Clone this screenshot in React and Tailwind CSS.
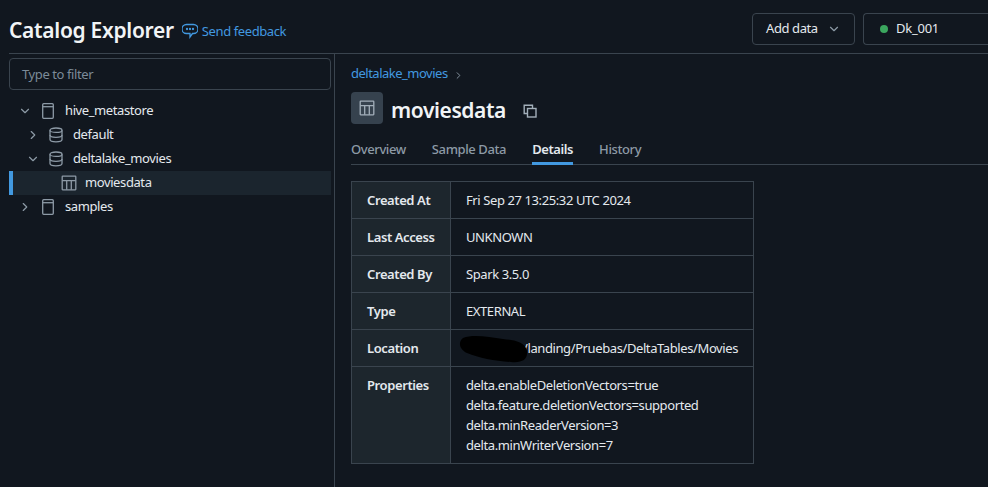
import { ChevronDown, ChevronRight } from 'lucide-react';

const ROWS = [
  { label: 'Created At', value: 'Fri Sep 27 13:25:32 UTC 2024' },
  { label: 'Last Access', value: 'UNKNOWN' },
  { label: 'Created By', value: 'Spark 3.5.0' },
  { label: 'Type', value: 'EXTERNAL' },
];

const PROPERTIES = [
  'delta.enableDeletionVectors=true',
  'delta.feature.deletionVectors=supported',
  'delta.minReaderVersion=3',
  'delta.minWriterVersion=7',
];

const TABS = ['Overview', 'Sample Data', 'Details', 'History'];

function CatalogIcon() {
  return (
    <svg width="16" height="16" viewBox="0 0 16 16" fill="none" stroke="#8d9aa6" strokeWidth="1.3">
      <rect x="2.7" y="0.7" width="10.6" height="14.6" rx="1" />
      <path d="M2.7 3.7h10.6" />
    </svg>
  );
}

function SchemaIcon() {
  return (
    <svg width="16" height="16" viewBox="0 0 16 16" fill="none" stroke="#8d9aa6" strokeWidth="1.3">
      <ellipse cx="8" cy="3.2" rx="6" ry="2.2" />
      <path d="M2 3.200v9.300c0 1.300 2.700 2.300 6 2.300s6-1 6-2.300V3.200" />
      <path d="M2 8c0 1.300 2.700 2.300 6 2.300s6-1 6-2.300" />
    </svg>
  );
}

function TableIcon({ size = 16, color = '#8d9aa6' }) {
  return (
    <svg width={size} height={size} viewBox="0 0 16 16" fill="none" stroke={color} strokeWidth="1.3">
      <rect x="1.2" y="1.200" width="13.600" height="13.600" rx="0.5" />
      <path d="M1.200 5.700h13.600M5.700 5.700v9.100M10.300 5.700v9.100" />
    </svg>
  );
}

function TreeRow({ indent, open, leaf, icon, label, selected }) {
  return (
    <div className={`relative flex h-6 items-center ${indent} ${selected ? 'bg-[#1b252e]' : ''}`}>
      {selected && <div className="absolute inset-y-0 left-0 w-[4px] bg-[#4299e0]" />}
      {leaf ? null : open ? (
        <ChevronDown size={14} className="mr-[8px] text-[#8d9aa6]" />
      ) : (
        <ChevronRight size={14} className="mr-[8px] text-[#8d9aa6]" />
      )}
      {icon}
      <span className={`text-[13px] tracking-[-0.4px] text-[#e4e9ee] ${leaf ? 'ml-[8px]' : 'ml-[9px]'}`}>{label}</span>
    </div>
  );
}

function Sidebar() {
  return (
    <aside className="w-[325px] shrink-0 pt-[4px]">
      <div className="flex h-[32px] w-[322px] items-center rounded border border-[#3a444e] px-[12px] pt-[1px] text-[13px] tracking-[-0.4px] text-[#7c8b99]">
        Type to filter
      </div>
      <div className="mt-[9px] w-[322px]">
        <TreeRow indent="pl-[9px]" open icon={<CatalogIcon />} label="hive_metastore" />
        <TreeRow indent="pl-[17px]" icon={<SchemaIcon />} label="default" />
        <TreeRow indent="pl-[17px]" open icon={<SchemaIcon />} label="deltalake_movies" />
        <TreeRow indent="pl-[52px]" leaf selected icon={<TableIcon />} label="moviesdata" />
        <TreeRow indent="pl-[9px]" icon={<CatalogIcon />} label="samples" />
      </div>
    </aside>
  );
}

function DetailRow({ label, children, tall }) {
  return (
    <div className={`flex border-b border-[#3a444e] last:border-b-0 ${tall ? 'h-[96px]' : 'h-[37px]'}`}>
      <div className="flex w-[99px] shrink-0 border-r border-[#3a444e] bg-[#1d262d] pl-[15px] pt-[10px] text-[13px] font-semibold leading-[16px] tracking-[-0.4px] text-[#e4e9ee]">
        {label}
      </div>
      <div className="relative flex-1 pl-[15px] pt-[10px] text-[13px] leading-[16px] tracking-[-0.4px] text-[#e4e9ee]">{children}</div>
    </div>
  );
}

export default function App() {
  return (
    <div className="h-[487px] w-[988px] overflow-hidden bg-[#11171f] pl-[9px] font-['Noto_Sans',sans-serif]">
      <header className="flex h-[54px] items-start border-b border-[#3a444e]">
        <h1 className="mt-[16px] text-[21px] font-semibold leading-[28px] tracking-[-0.3px] text-[#f1f4f6]">Catalog Explorer</h1>
        <a className="ml-[8px] mt-[23px] flex items-center gap-[4px] text-[13px] leading-[16px] tracking-[-0.4px] text-[#4299e0]">
          <svg width="16" height="16" viewBox="0 0 16 16" fill="none" stroke="#4299e0" strokeWidth="1.3">
            <path d="M4.500 1.500h7a3.500 3.500 0 0 1 0 9H10.500L8 14v-3.500H4.500a3.500 3.500 0 0 1 0-9z" />
            <circle cx="5" cy="6" r="0.5" fill="#4299e0" />
            <circle cx="8" cy="6" r="0.5" fill="#4299e0" />
            <circle cx="11" cy="6" r="0.5" fill="#4299e0" />
          </svg>
          Send feedback
        </a>
        <div className="ml-auto mt-[13px] flex gap-[8px]">
          <button className="flex h-[32px] w-[103px] items-center rounded border border-[#3a444e] pl-[13px] text-[13px] tracking-[-0.4px] text-[#e4e9ee]">
            Add data
            <ChevronDown size={14} className="ml-[9px] text-[#8d9aa6]" />
          </button>
          <button className="flex h-[32px] w-[125px] items-center rounded-l border-y border-l border-[#3a444e] pl-[16px] text-[13px] tracking-[-0.25px] text-[#e4e9ee]">
            <span className="mr-[8px] h-[8px] w-[8px] rounded-full bg-[#3ba65e]" />
            Dk_001
          </button>
        </div>
      </header>
      <div className="flex h-[433px]">
        <Sidebar />
        <main className="flex-1 border-l border-[#3a444e] pl-[16px]">
          <div className="mt-[11px] flex items-center text-[13px] leading-[16px] tracking-[-0.5px] text-[#4299e0]">
            deltalake_movies
            <ChevronRight size={11} className="ml-[5px] mt-[4px] text-[#8d9aa6]" />
          </div>
          <div className="mt-[11px] flex h-[32px] items-center">
            <div className="flex h-[32px] w-[32px] items-center justify-center rounded bg-[#36424e]">
              <TableIcon color="#a3afba" />
            </div>
            <h2 className="ml-[8px] mt-[4px] text-[21px] font-semibold leading-[28px] tracking-[-0.4px] text-[#f1f4f6]">moviesdata</h2>
            <svg className="ml-[16px] mt-[5px]" width="16" height="16" viewBox="0 0 16 16" fill="none" stroke="#a3afba" strokeWidth="1.4">
              <path d="M5 10.500H2.200V2.200h8.300V5" />
              <rect x="5.500" y="5.500" width="8.500" height="8.500" />
            </svg>
          </div>
          <nav className="mt-[16px] flex h-[25px] gap-[26px] border-b border-[#3a444e] pt-[1px] text-[13px] font-medium leading-[16px] tracking-[-0.4px]">
            {TABS.map((tab) => (
              <div
                key={tab}
                className={tab === 'Details' ? 'h-[24px] border-b-[3px] border-[#4299e0] font-semibold text-[#e4e9ee]' : 'text-[#8d9aa6]'}
              >
                {tab}
              </div>
            ))}
          </nav>
          <div className="mt-[16px] w-[403px] border border-[#3a444e]">
            {ROWS.map((row) => (
              <DetailRow key={row.label} label={row.label}>{row.value}</DetailRow>
            ))}
            <DetailRow label="Location">
              <span className="block whitespace-nowrap pr-[15px] text-right">/landing/Pruebas/DeltaTables/Movies</span>
              <svg className="absolute left-[8px] top-[4px]" width="70" height="29" viewBox="0 0 70 29">
                <path d="M4 4C14 0 30 3 44 5c9 1 22 2 24 12 1 9-5 12-16 11C36 27 20 24 8 19 0 15-1 8 4 4z" fill="#000" />
              </svg>
            </DetailRow>
            <DetailRow label="Properties" tall>
              {PROPERTIES.map((prop) => (
                <div key={prop} className="h-[20px] -translate-y-[2px] leading-[20px]">{prop}</div>
              ))}
            </DetailRow>
          </div>
        </main>
      </div>
    </div>
  );
}
